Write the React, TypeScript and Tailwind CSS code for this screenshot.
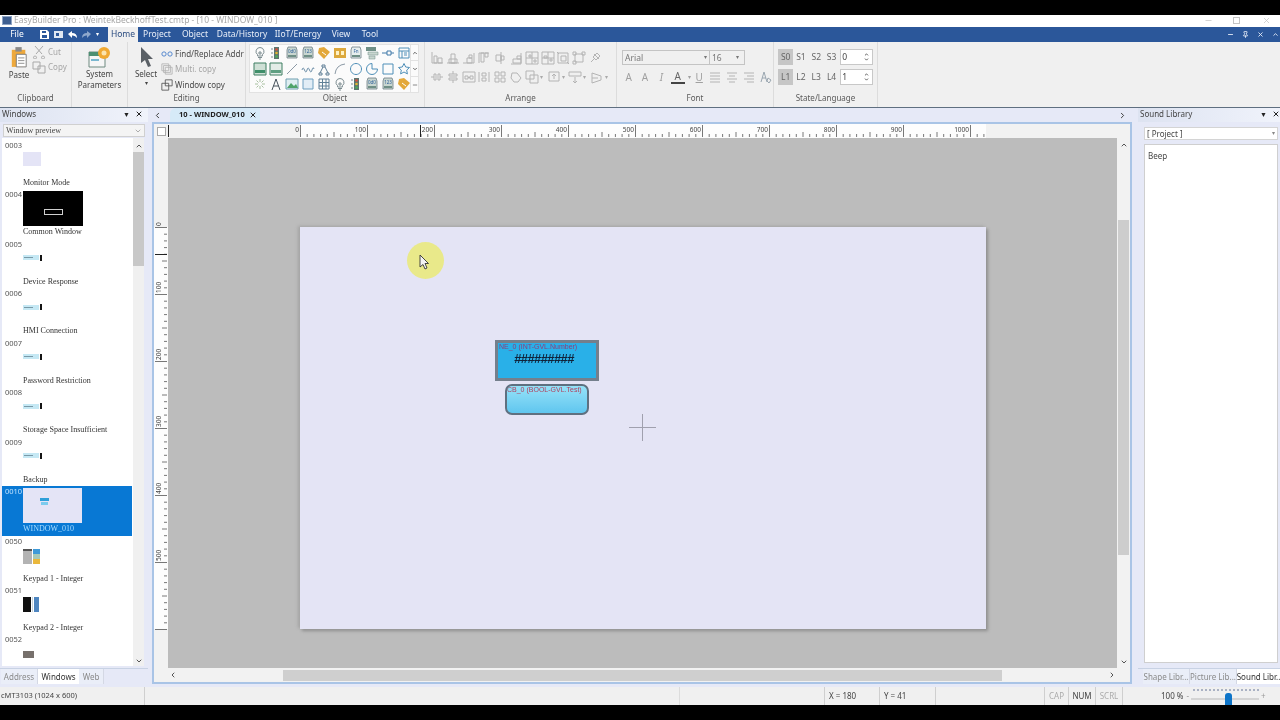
import type { ReactNode } from "react";
import { ChevronDown, ChevronLeft, ChevronRight, ChevronUp, Minus, Pin, X } from "lucide-react";

const ui = { fontFamily: '"Noto Sans", "Liberation Sans", sans-serif' };

// single-path toolbar glyph, 14 box
function Ico({ d, c = "#b4b4b4", w = 14 }: { d: string; c?: string; w?: number }) {
  return (
    <svg width={w} height={w} viewBox="0 0 14 14" fill="none" stroke={c} strokeWidth="1" className="shrink-0">
      <path d={d} />
    </svg>
  );
}

function Meter({ label = "0.0", fill = "#c9d6d0" }: { label?: string; fill?: string }) {
  return (
    <svg width="14" height="14" viewBox="0 0 14 14" className="shrink-0">
      <path d="M2 4l1-3h8l1 3v8H2z" fill={fill} stroke="#6e7f86" strokeWidth="0.8" />
      <path d="M3 9h8v2H3z" fill="#6f8f86" />
      <text x="7" y="6.5" fontSize="4.5" textAnchor="middle" fill="#2f5f9a">{label}</text>
    </svg>
  );
}

function Bulb() {
  return <Ico c="#7d8d91" d="M7 1.5a4 4 0 0 1 2.4 7.2V10H4.6V8.7A4 4 0 0 1 7 1.5zM5 11.5h4M6 13h2M6 6h2v2H6z" />;
}
function Light() {
  return (
    <svg width="14" height="14" viewBox="0 0 14 14" className="shrink-0">
      <path d="M5 1h5v12H5z" fill="#5d7570" />
      <circle cx="7.5" cy="3.5" r="1.3" fill="#d8503c" />
      <circle cx="7.5" cy="7" r="1.3" fill="#e5b52f" />
      <circle cx="7.5" cy="10.5" r="1.3" fill="#4fae58" />
      <path d="M2 3h2M2 7h2M2 11h2" stroke="#7d8d91" />
    </svg>
  );
}
function Tag() {
  return (
    <svg width="14" height="14" viewBox="0 0 14 14" className="shrink-0">
      <path d="M7 1l6 5-6 7-6-6 1-5z" fill="#e3a83a" />
      <path d="M5 6l4 3" stroke="#fff" />
    </svg>
  );
}

const galleryRows: ReactNode[][] = [
  [
    <Bulb />,
    <Light />,
    <Meter label="0d0" />,
    <Meter label="123" />,
    <Tag />,
    <svg width="14" height="14" viewBox="0 0 14 14" className="shrink-0">
      <path d="M1 2h12v10H1z" fill="#dca83c" />
      <path d="M3 5h3v4H3zM8 5h3v4H8z" fill="#fff2c4" />
    </svg>,
    <Meter label="Fn" fill="#e7eeee" />,
    <svg width="14" height="14" viewBox="0 0 14 14" className="shrink-0">
      <path d="M1 1h10v4H1z" fill="#6f8f86" />
      <path d="M3 6h10v3H3zM4 10h6v3H4z" fill="#c9d6d0" stroke="#6f8f86" strokeWidth="0.5" />
    </svg>,
    <Ico c="#3f78a8" d="M1 7h5M6 5h4v4H6zM10 7h3" />,
    <Ico c="#4f8fb8" d="M2 2h10v10H2zM2 5h10M5 5v7M7 7h3M7 9h3" />,
  ],
  [
    <svg width="14" height="14" viewBox="0 0 14 14" className="shrink-0">
      <path d="M1 1h12v12H1z" fill="#cfe0d6" stroke="#3f7f62" />
      <path d="M2 8h10v3H2z" fill="#3f8f6a" />
    </svg>,
    <svg width="14" height="14" viewBox="0 0 14 14" className="shrink-0">
      <path d="M1 1h12v12H1z" fill="#e3ece7" stroke="#3f7f62" />
      <path d="M2 8h10v3H2z" fill="#5f9f82" />
    </svg>,
    <Ico c="#8c9aa6" d="M2 12L12 2" />,
    <Ico c="#6c8ea8" d="M1 8q1-4 2.5 0t2.5 0 2.5 0 2.5 0 2-1" />,
    <Ico c="#5f7f96" d="M2 11h3v2H2zM9 11h3v2H9zM5 3h3v2H5zM6 5l-3 6M8 5l3 6" />,
    <Ico c="#8c9aa6" d="M2 12Q3 3 12 2" />,
    <Ico c="#4f8fb8" d="M7 1.5a5.5 5.5 0 1 0 .01 0z" />,
    <Ico c="#4f8fb8" d="M7 1.5a5.5 5.5 0 1 0 5.5 5.5H7z" />,
    <Ico c="#4f8fb8" d="M2 2h10v10H2z" />,
    <Ico c="#4f8fb8" d="M7 1.5l1.7 3.5 3.8.5-2.8 2.6.7 3.8L7 10l-3.4 1.9.7-3.8-2.8-2.6 3.8-.5z" />,
  ],
  [
    <Ico c="#a8c0a0" d="M7 2v3M7 9v3M2 7h3M9 7h3M3.5 3.5l2 2M10.5 3.5l-2 2M3.5 10.5l2-2M10.5 10.5l-2-2" />,
    <Ico c="#44505a" d="M3 13L7 2l4 11M4.5 9h5" />,
    <svg width="14" height="14" viewBox="0 0 14 14" className="shrink-0">
      <path d="M1 2h12v10H1z" fill="#dfeef2" stroke="#6f9fb0" />
      <path d="M2 11l4-5 3 3 2-2 2 4z" fill="#4fa36a" />
    </svg>,
    <svg width="14" height="14" viewBox="0 0 14 14" className="shrink-0">
      <path d="M2 2h10v10H2z" fill="#e2edf6" stroke="#6f9fc0" />
    </svg>,
    <Ico c="#5f7f96" d="M2 2h10v10H2zM2 5.5h10M2 9h10M5.5 2v10M9 2v10" />,
    <Bulb />,
    <Light />,
    <Meter label="0d0" />,
    <Meter label="123" />,
    <Tag />,
  ],
];

const arrangeTop = [
  "M2 1v11h11M4 5h3v7H4zM8 7h4v5H8z",
  "M1 12h12M5 3h4v9H5zM3 8h8v4H3z",
  "M1 12h11V2M5 7h5v5H5zM7 4h3v3H7z",
  "M2 2h10M2 2v10M4 2h3v9H4zM8 2h3v4H8z",
  "M8 1v12M3 4h5v6H3zM8 5h3v4H8z",
  "M12 2v11H2M4 8h8v4H4zM8 5h4v3H8z",
  "M1 1h12v12H1zM7 1v12M1 7h12M4 4h2v2H4zM9 9h2v2H9z",
  "M1 1h12v12H1zM1 7h12M7 1v12M3 5h3v2H3zM9 8h2v2H9z",
  "M2 2h10v10H2zM5 5h5v5H5zM1 1l2 2M13 13l-2-2",
  "M3 3h8v8H3zM1 1h3v3H1zM10 1h3v3h-3zM1 10h3v3H1z",
  "M3 11l4-4M6 3l5 5M9 2l3 3-4 4-3-3z",
];
const arrangeBottom: [string, boolean][] = [
  ["M1 7h3M10 7h3M4 4h2v6H4zM8 4h2v6H8z", false],
  ["M7 1v3M7 10v3M3 4h8v2H3zM3 8h8v2H3z", false],
  ["M1 2h12v10H1zM3 6h3v3H3zM8 6h3v3H8zM6 7.5h2", false],
  ["M2 2v10M12 2v10M5 3h4v3H5zM5 8h4v3H5z", false],
  ["M2 2h4v4H2zM8 2h4v4H8zM2 8h4v4H2zM8 8h4v4H8z", false],
  ["M3 3h5l4 5-3 4H5L2 8z", false],
  ["M1 1h8v8H1zM5 5h8v8H5z", true],
  ["M2 2h10v9H2zM7 9V4M5 6l2-2 2 2", true],
  ["M1 2h12v4H1zM7 7v6M5 11l2 2 2-2", true],
  ["M2 3l9 3v4l-9 3zM2 8h6", true],
];

function Group({ w, label, children }: { w: string; label: string; children: ReactNode }) {
  return (
    <div className={`${w} h-full shrink-0 flex flex-col border-r border-[#dcdcdc]`}>
      <div className="h-[50px] relative">{children}</div>
      <div className="text-[8px] text-[#5a5a5a] text-center leading-[12px]">{label}</div>
    </div>
  );
}

function SmallAction({ icon, label, dim }: { icon: ReactNode; label: string; dim?: boolean }) {
  return (
    <div className={`flex items-center gap-[2px] h-[15.5px] text-[8px] whitespace-nowrap ${dim ? "text-[#a6a6a6]" : "text-[#4a4a4a]"}`}>
      {icon}
      <span>{label}</span>
    </div>
  );
}

function Ribbon() {
  return (
    <div className="h-[66px] shrink-0 bg-[#f0f0f0] flex border-b border-[#5f6f80]" style={ui}>
      <Group w="w-[72px]" label="Clipboard">
        <div className="flex pl-[8px] pt-[4px]">
          <div className="w-[22px] flex flex-col items-center">
            <svg width="18" height="22" viewBox="0 0 20 24">
              <path d="M2 4h15v19H2z" fill="#eea93c" />
              <path d="M6 1h7v5H6z" fill="#8a8a8a" />
              <path d="M7 9h11v14H7z" fill="#fff" stroke="#777" />
              <path d="M9 13h7M9 16h7M9 19h7" stroke="#888" />
            </svg>
            <span className="text-[8px] text-[#444] leading-[11px] mt-[1px]">Paste</span>
          </div>
          <div className="ml-[2px] -mt-[2px]">
            <SmallAction dim label="Cut" icon={<Ico c="#a8a8a8" d="M3 1l7 8M11 1L4 9M3 11a1.5 1.5 0 1 0 .01 0zM11 11a1.5 1.5 0 1 0 .01 0z" />} />
            <SmallAction dim label="Copy" icon={<Ico c="#a8a8a8" d="M1 2h7v7H1zM6 6h7v7H6z" />} />
          </div>
        </div>
      </Group>
      <Group w="w-[56px]" label="">
        <div className="flex flex-col items-center pt-[4px]">
          <svg width="24" height="22" viewBox="0 0 24 22">
            <path d="M1 6h16v15H1z" fill="#f6f6f6" stroke="#6e8a80" />
            <path d="M1 6h16v4H1z" fill="#4c8f72" />
            <path d="M3 13h8v2H3z" fill="#7ab7d0" />
            <circle cx="16" cy="7" r="6" fill="#f0a932" />
            <circle cx="16" cy="7" r="2.5" fill="#fbe4ad" />
          </svg>
          <span className="text-[8px] text-[#444] leading-[11px] text-center">System Parameters</span>
        </div>
      </Group>
      <Group w="w-[118px]" label="Editing">
        <div className="flex pt-[4px] pl-[8px]">
          <div className="w-[20px] flex flex-col items-center">
            <svg width="14" height="21" viewBox="0 0 14 21" className="ml-[2px]">
              <path d="M1 1l12 12H8l3 7-3 1-3-7-4 3z" fill="#5a6066" />
            </svg>
            <span className="text-[8px] text-[#444] leading-[11px] mt-[1px]">Select</span>
            <span className="text-[6px] text-[#444] leading-[8px]">▾</span>
          </div>
          <div className="ml-[5px]">
            <SmallAction label="Find/Replace Addr" icon={<Ico w={12} c="#3f78c8" d="M1 7a2.5 2.5 0 1 0 5 0 2.5 2.5 0 1 0-5 0M8 7a2.5 2.5 0 1 0 5 0 2.5 2.5 0 1 0-5 0" />} />
            <SmallAction dim label="Multi. copy" icon={<Ico w={12} d="M1 1h8v8H1zM3 3h8v8H3zM5 5h8v8H5z" />} />
            <SmallAction label="Window copy" icon={<Ico w={12} c="#555" d="M5 1h8v7H5zM1 5h8v8H1z" />} />
          </div>
        </div>
      </Group>
      <Group w="w-[179px]" label="Object">
        <div className="flex ml-[3px] mt-[2px] w-[170px] h-[49px] bg-[#fbfbfb] border border-[#e2e2e2]">
          <div className="w-[160px] flex flex-col justify-between py-[1px] pl-[3px] overflow-hidden">
            {galleryRows.map((row, i) => (
              <div key={i} className="flex gap-[2px]">
                {row.map((icon, j) => <span key={j} className="w-[14px] h-[14px] flex">{icon}</span>)}
              </div>
            ))}
          </div>
          <div className="flex-1 flex flex-col border-l border-[#e2e2e2] text-[#666]">
            <div className="flex-1 flex items-center justify-center border-b border-[#e2e2e2]"><ChevronUp size={6} strokeWidth={4} /></div>
            <div className="flex-1 flex items-center justify-center border-b border-[#e2e2e2]"><ChevronDown size={6} strokeWidth={4} /></div>
            <div className="flex-1 flex items-center justify-center"><Minus size={6} strokeWidth={3} /></div>
          </div>
        </div>
      </Group>
      <Group w="w-[192px]" label="Arrange">
        <div className="pl-[5px] pt-[9px]">
          <div className="flex gap-[1.8px]">
            {arrangeTop.map((d, i) => <Ico key={i} d={d} />)}
          </div>
          <div className="flex gap-[1.8px] mt-[5px]">
            {arrangeBottom.map(([d, caret], i) => (
              <span key={i} className={`flex items-center ${caret ? "mr-[2px]" : ""}`}>
                <Ico d={d} />
                {caret && <span className="text-[6px] text-[#aaa] ml-[1px]">▾</span>}
              </span>
            ))}
          </div>
        </div>
      </Group>
      <Group w="w-[157px]" label="Font">
        <div className="pl-[5px] pt-[8px]">
          <div className="flex w-[123px] h-[15px] bg-[#f0f0f0] border border-[#c4c4c4] text-[8.5px] text-[#777] leading-[13px]">
            <div className="w-[87px] px-[2px] flex justify-between border-r border-[#c4c4c4]"><span>Arial</span><span className="text-[6px]">▾</span></div>
            <div className="flex-1 px-[2px] flex justify-between pr-[5px]"><span>16</span><span className="text-[6px]">▾</span></div>
          </div>
          <div className="flex items-center gap-[3px] mt-[5px] text-[#a0a0a0] text-[10px] leading-[14px]">
            <span className="w-[14px] text-center">A</span>
            <span className="w-[14px] text-center">A</span>
            <span className="w-[14px] text-center italic">I</span>
            <span className="w-[14px] text-center text-[#666] border-b-2 border-[#444] leading-[11px]">A</span>
            <span className="text-[6px]">▾</span>
            <span className="w-[12px] text-center underline">U</span>
            <Ico d="M2 3h10M2 6h10M2 9h10M2 12h10" />
            <Ico d="M2 3h10M4 6h6M2 9h10M4 12h6" />
            <Ico d="M2 3h10M5 6h7M2 9h10M5 12h7" />
            <Ico c="#9aa6b0" d="M2 12L5 2l3 10M3 8h4M9 8l3 2-2 3-2-2z" />
          </div>
        </div>
      </Group>
      <Group w="w-[104px]" label="State/Language">
        <div className="pl-[4px] pt-[7px] text-[8.5px] text-[#666]">
          {[
            { keys: ["S0", "S1", "S2", "S3"], value: "0" },
            { keys: ["L1", "L2", "L3", "L4"], value: "1" },
          ].map((row, i) => (
            <div key={i} className={`flex items-center h-[16px] ${i ? "mt-[4px]" : ""}`}>
              {row.keys.map((k, j) => (
                <span key={k} className={`w-[15.3px] h-[16px] leading-[16px] text-center ${j === 0 ? "bg-[#c6c6c6]" : ""}`}>{k}</span>
              ))}
              <div className="w-[33px] h-[16px] ml-[1px] bg-white border border-[#c8c8c8] flex justify-between items-center pl-[1px] pr-[3px] text-[#444]">
                <span>{row.value}</span>
                <span className="flex flex-col">
                  <ChevronUp size={5} strokeWidth={4} />
                  <ChevronDown size={5} strokeWidth={4} />
                </span>
              </div>
            </div>
          ))}
        </div>
      </Group>
      <div className="flex-1" />
    </div>
  );
}

// small window thumbnails for the preview list
function DialogThumb() {
  return (
    <div className="flex items-center w-[20px] h-[6px]">
      <div className="w-[16px] h-[5px] bg-[#c5e8f4] flex items-center pl-[1px]">
        <div className="w-[9px] h-[1px] bg-[#7a9aa8]" />
      </div>
      <div className="w-[2px] h-[6px] ml-[1px] bg-[#141414]" />
    </div>
  );
}

function Keypad1() {
  return (
    <div className="grid grid-cols-[9px_7px] gap-x-[1px] w-[17px] h-[15px] mt-[3px]">
      <div className="bg-[#b3b3b3] border-t-2 border-[#555]" />
      <div className="flex flex-col">
        <div className="h-[5px] bg-[#3f9ad8]" />
        <div className="h-[5px] bg-[#a7c9b8]" />
        <div className="h-[5px] bg-[#eab83c]" />
      </div>
    </div>
  );
}
function Keypad2() {
  return (
    <div className="flex gap-[1px] w-[16px] h-[15px] mt-[2px]">
      <div className="w-[9px] bg-[#101010]" />
      <div className="w-[1px] bg-[#c8d4dc]" />
      <div className="w-[5px] bg-[#4f86c0]" />
    </div>
  );
}

const windows: { id: string; name: string; thumb: ReactNode }[] = [
  { id: "0003", name: "Monitor Mode", thumb: <div className="w-[18px] h-[14px] bg-[#e4e4f6]" /> },
  {
    id: "0004",
    name: "Common Window",
    thumb: (
      <div className="w-[60px] h-[35px] bg-black flex items-center justify-center pt-[7px]">
        <div className="w-[19px] h-[6px] border border-[#d0d0d0]" />
      </div>
    ),
  },
  { id: "0005", name: "Device Response", thumb: <DialogThumb /> },
  { id: "0006", name: "HMI Connection", thumb: <DialogThumb /> },
  { id: "0007", name: "Password Restriction", thumb: <DialogThumb /> },
  { id: "0008", name: "Storage Space Insufficient", thumb: <DialogThumb /> },
  { id: "0009", name: "Backup", thumb: <DialogThumb /> },
  {
    id: "0010",
    name: "WINDOW_010",
    thumb: (
      <div className="w-[59px] h-[35px] bg-[#e4e4f6] pt-[10px] pl-[17px]">
        <div className="w-[9px] h-[3px] bg-[#2f9fd8]" />
        <div className="w-[7px] h-[3px] ml-[1px] mt-[1px] bg-[#7ccbee]" />
      </div>
    ),
  },
  { id: "0050", name: "Keypad 1 - Integer", thumb: <Keypad1 /> },
  { id: "0051", name: "Keypad 2 - Integer", thumb: <Keypad2 /> },
  { id: "0052", name: "", thumb: <div className="w-[11px] h-[7px] mt-[3px] bg-[#77706c]" /> },
];

function WindowItem({ id, name, thumb }: { id: string; name: string; thumb: ReactNode }) {
  const selected = id === "0010";
  return (
    <div className={`flex h-[49.45px] w-[130px] shrink-0 ${selected ? "bg-[#0878d4]" : ""}`}>
      <div className={`w-[21px] pl-[3px] text-[7.5px] leading-[10px] ${selected ? "text-[#bfe2ff]" : "text-[#555]"}`} style={ui}>
        {id}
      </div>
      <div className="flex-1 pt-[1.5px]">
        <div className="h-[35px] flex items-center">{thumb}</div>
        <div
          className={`text-[8px] leading-[10px] mt-[1.5px] whitespace-nowrap ${selected ? "text-[#a8dcff]" : "text-[#333]"}`}
          style={{ fontFamily: '"Liberation Serif", serif' }}
        >
          {name}
        </div>
      </div>
    </div>
  );
}

function PanelHeader({ title, pr }: { title: string; pr: string }) {
  return (
    <div className={`w-full h-[14px] flex items-center justify-between pl-[2px] ${pr} pb-[2px] bg-gradient-to-r from-[#dde3f1] to-[#f0f3fb] text-[8px] text-[#444]`}>
      <span>{title}</span>
      <span className="flex items-center gap-[5px] text-[#222]">
        <span className="text-[7px] leading-none">▼</span>
        <X size={8} strokeWidth={3} />
      </span>
    </div>
  );
}

function BottomTabs({ tabs, active, widths }: { tabs: string[]; active: string; widths: string[] }) {
  return (
    <div className="flex h-[16px] mt-[2px] border-t border-[#c8d2e4] text-[8px]">
      {tabs.map((t, i) => (
        <div
          key={t}
          className={`${widths[i]} h-full flex items-center justify-center whitespace-nowrap overflow-hidden ${
            t === active ? "bg-white text-[#333]" : "bg-[#eaeef8] text-[#8a8a8a] border-r border-[#d4d8e4]"
          }`}
        >
          {t}
        </div>
      ))}
    </div>
  );
}

function LeftPanel() {
  return (
    <div className="w-[148px] shrink-0 flex flex-col" style={ui}>
      <PanelHeader title="Windows" pr="pr-[5px]" />
      <div
        className="mx-[3px] mt-[2px] h-[13px] bg-[#f4f4f4] border border-[#d0d0d0] flex items-center justify-between px-[2px] text-[8px] text-[#444]"
        style={{ fontFamily: '"Liberation Serif", serif' }}
      >
        <span>Window preview</span>
        <ChevronDown size={8} className="text-[#888]" />
      </div>
      <div className="h-[528px] mt-[1px] ml-[2px] w-[142px] bg-white flex overflow-hidden">
        <div className="w-[131px] flex flex-col overflow-hidden pt-[2px]">
          {windows.map((win) => <WindowItem key={win.id} {...win} />)}
        </div>
        <div className="w-[11px] bg-[#f0f0f0] flex flex-col items-center pt-[4px] text-[#555]">
          <ChevronUp size={8} strokeWidth={3} />
          <div className="w-full h-[114px] mt-[2px] bg-[#c8c8c8]" />
          <div className="flex-1" />
          <ChevronDown size={8} strokeWidth={3} className="mb-[1px]" />
        </div>
      </div>
      <BottomTabs tabs={["Address", "Windows", "Web"]} active="Windows" widths={["w-[37px] ml-[1px]", "w-[41px]", "w-[25px]"]} />
    </div>
  );
}

const majors = [0, 100, 200, 300, 400, 500, 600, 700, 800, 900, 1000];
const minors = Array.from({ length: 103 }, (_, i) => i * 10);

function HRuler() {
  return (
    <svg width="949" height="14" className="block bg-[#f2f2f2]">
      <rect x="132" y="0" width="686" height="14" fill="#fdfdfd" />
      {minors.map((v) => (
        <path key={v} d={`M${132.5 + v * 0.67} ${v % 100 === 0 ? 1 : v % 50 === 0 ? 8 : 10}V13`} stroke="#555" strokeWidth="0.8" />
      ))}
      <path d="M0.5 1V13M252.5 1V13" stroke="#222" />
      {majors.map((v) => (
        <text key={v} x={131 + v * 0.67} y="8" fontSize="6.5" textAnchor="end" fill="#444">{v}</text>
      ))}
    </svg>
  );
}

function VRuler() {
  const rows = [0, 100, 200, 300, 400, 500];
  const ticks = Array.from({ length: 61 }, (_, i) => i * 10);
  return (
    <svg width="14" height="530" className="block bg-[#f2f2f2]">
      <rect x="0" y="89" width="14" height="402" fill="#fdfdfd" />
      {ticks.map((v) => (
        <path key={v} d={`M${v % 100 === 0 ? 1 : v % 50 === 0 ? 8 : 10} ${89.5 + v * 0.67}H13`} stroke="#555" strokeWidth="0.8" />
      ))}
      <path d="M1 116.5H13" stroke="#222" />
      {rows.map((v) => (
        <text key={v} fontSize="6.5" fill="#444" textAnchor="start" transform={`translate(7 ${88 + v * 0.67}) rotate(-90)`}>{v}</text>
      ))}
    </svg>
  );
}

function Page() {
  return (
    <div className="relative w-[686px] h-[402px] bg-[#e4e4f5] shadow-[-2px_-1px_3px_#a4a4a4,2px_2px_3px_#8f8f8f]" style={{ fontFamily: '"Liberation Sans", sans-serif' }}>
      {/* numeric object */}
      <div className="absolute left-[195px] top-[113px] w-[104px] h-[41px] border-[3px] border-[#747f8c] bg-[#29b0e8]">
        <div className="text-[7px] leading-[8px] text-[#8e3f78] whitespace-nowrap pl-[1px]">NE_0 (INT-GVL.Number)</div>
        <div className="text-[13px] leading-[14px] mt-[1px] text-center text-[#10243c] font-bold pr-[6px] tracking-[-0.6px]">#########</div>
      </div>
      {/* bit button */}
      <div className="absolute left-[205px] top-[157px] w-[84px] h-[31px] rounded-[7px] border-2 border-[#5f7080] bg-gradient-to-b from-[#95e2f8] to-[#5fc6ef] overflow-hidden">
        <div className="text-[7px] leading-[8px] text-[#b0405e] whitespace-nowrap text-center pr-[8px]">CB_0 (BOOL-GVL.Test)</div>
      </div>
      {/* crosshair */}
      <svg className="absolute left-[329px] top-[187px]" width="27" height="27">
        <path d="M13.5 0V27M0 13.5H27" stroke="#a0a0ae" />
      </svg>
      {/* mouse pointer with highlight */}
      <div className="absolute left-[107px] top-[15px] w-[37px] h-[37px] rounded-full bg-[#e9e98a]" />
      <svg className="absolute left-[119px] top-[27px]" width="10" height="16" viewBox="0 0 10 16">
        <path d="M1 1v12l3-2.5 2 4.5 2-1-2-4.5h3.5z" fill="#f4f4f4" stroke="#333" strokeWidth="0.9" />
      </svg>
    </div>
  );
}

function CenterPanel() {
  return (
    <div className="w-[980px] ml-[4px] shrink-0 flex flex-col" style={ui}>
      <div className="h-[14px] flex text-[7.5px]">
        <ChevronLeft size={9} strokeWidth={2.5} className="ml-[1px] mt-[3px] text-[#333]" />
        <div className="ml-[8px] w-[90px] h-[14px] bg-[#d6eaf8] flex items-center justify-between pl-[9px] pr-[3px] font-bold text-[#222] rounded-tl-[6px] whitespace-nowrap">
          <span>10 - WINDOW_010</span>
          <X size={8} strokeWidth={3} />
        </div>
        <div className="flex-1" />
        <ChevronRight size={9} strokeWidth={2.5} className="mt-[3px] mr-[5px] text-[#333]" />
      </div>
      <div className="w-[980px] h-[562px] border-2 border-[#a9c4e6] bg-[#f2f2f2] grid grid-cols-[14px_949px_13px] grid-rows-[14px_530px_14px]">
        <div className="flex items-center justify-center">
          <div className="w-[9px] h-[9px] bg-white border border-[#aaa]" />
        </div>
        <HRuler />
        <div />
        <VRuler />
        <div className="bg-[#bcbcbc] pl-[132px] pt-[89px] overflow-hidden">
          <Page />
        </div>
        <div className="flex flex-col items-center pt-[3px] text-[#555]">
          <ChevronUp size={8} strokeWidth={3} />
          <div className="w-[11px] h-[335px] mt-[71px] bg-[#cdcdcd]" />
          <div className="flex-1" />
          <ChevronDown size={8} strokeWidth={3} className="mb-[2px]" />
        </div>
        <div className="col-span-3 flex items-center text-[#555]">
          <ChevronLeft size={8} strokeWidth={3} className="ml-[15px]" />
          <div className="w-[719px] h-[11px] ml-[106px] bg-[#cfcfcf]" />
          <div className="flex-1" />
          <ChevronRight size={8} strokeWidth={3} className="mr-[14px]" />
        </div>
      </div>
    </div>
  );
}

function RightPanel() {
  return (
    <div className="flex-1 ml-[6px] flex flex-col min-w-0" style={ui}>
      <PanelHeader title="Sound Library" pr="pr-0" />
      <div className="ml-[6px] mr-[2px] mt-[5px] h-[13px] bg-white border border-[#d4d4d4] flex items-center justify-between px-[2px] text-[8px] text-[#444]">
        <span>[ Project ]</span>
        <span className="text-[6px] text-[#888]">▾</span>
      </div>
      <div className="ml-[6px] mr-[2px] mt-[4px] mb-[3px] h-[519px] bg-white border border-[#cfcfcf] pl-[3px] pt-[5px] text-[8px] text-[#444]">Beep</div>
      <BottomTabs tabs={["Shape Libr...", "Picture Lib...", "Sound Libr.."]} active="Sound Libr.." widths={["w-[47px] ml-[5px]", "w-[47px]", "w-[43px]"]} />
    </div>
  );
}

function StatusCell({ w, children, dim, left }: { w: string; children?: ReactNode; dim?: boolean; left?: boolean }) {
  return (
    <div className={`${w} h-full shrink-0 flex items-center ${left ? "pl-[4px]" : "justify-center"} border-r border-[#cfcfcf] ${dim ? "text-[#ababab]" : "text-[#444]"}`}>
      {children}
    </div>
  );
}

function StatusBar() {
  return (
    <div className="h-[18px] shrink-0 bg-[#f0f0f0] flex items-center text-[8px] text-[#444]" style={ui}>
      <div className="w-[145px] h-full flex items-center pl-[1px] border-r border-[#cfcfcf] text-[7.5px] whitespace-nowrap">cMT3103 (1024 x 600)</div>
      <div className="w-[535px] h-full border-r border-[#dcdcdc]" />
      <div className="w-[145px] h-full border-r border-[#cfcfcf]" />
      <StatusCell w="w-[55px]" left>X = 180</StatusCell>
      <StatusCell w="w-[56px]" left>Y = 41</StatusCell>
      <StatusCell w="w-[109px]" />
      <StatusCell w="w-[24px]" dim>CAP</StatusCell>
      <StatusCell w="w-[27px]">NUM</StatusCell>
      <StatusCell w="w-[27px]" dim>SCRL</StatusCell>
      <div className="flex-1 h-full flex items-center pl-[38px] relative">
        <span className="whitespace-nowrap">100 %</span>
        <span className="ml-[3px] text-[#999]">-</span>
        <div className="relative w-[68px] h-full ml-[2px]">
          <div className="absolute left-0 right-0 top-[11px] h-[2px] bg-[#d4d4d4]" />
          <div className="absolute left-[2px] right-0 top-[2px] h-[2px] border-t-2 border-dotted border-[#aab2c4]" />
          <div className="absolute left-[34px] top-[6px] w-[7px] h-[12px] rounded-t-[3px] bg-[#0d74c8]" />
        </div>
        <span className="ml-[2px] text-[#999]">+</span>
      </div>
    </div>
  );
}

export default function App() {
  return (
    <div className="w-[1280px] h-[720px] bg-black flex flex-col overflow-hidden blur-[0.3px]">
      <div className="h-[15px] shrink-0" />
      <div className="h-[12px] shrink-0 bg-white flex items-center pb-[2px] text-[8.5px] text-[#a8a8a8]" style={ui}>
        <div className="w-[10px] h-[9px] ml-[2px] mr-[2px] bg-[#3f5f90] border border-[#8fa4c4]" />
        <span>EasyBuilder Pro : WeintekBeckhoffTest.cmtp - [10 - WINDOW_010 ]</span>
        <div className="flex-1" />
        <Minus size={9} className="mr-[20px] text-[#c4c4c4]" />
        <div className="w-[7px] h-[7px] mr-[22px] border border-[#c4c4c4]" />
        <X size={9} className="mr-[9px] text-[#c4c4c4]" />
      </div>
      <div className="h-[15px] shrink-0 bg-[#2b579a] flex items-center text-[8.5px] text-[#e8eef8]" style={ui}>
        <span className="w-[34px] text-center text-white">File</span>
        <span className="flex items-center gap-[5px] w-[74px] pl-[6px] text-white">
          <svg width="9" height="9" viewBox="0 0 9 9"><path d="M0 0h7l2 2v7H0z" fill="#fff" /><path d="M2 1h4v2H2zM2 5h5v3H2z" fill="#2b579a" /></svg>
          <svg width="9" height="9" viewBox="0 0 9 9"><path d="M0 1h9v7H0z" fill="#dfe7f2" /><path d="M2 3h3v3H2z" fill="#2b579a" /></svg>
          <svg width="9" height="9" viewBox="0 0 9 9"><path d="M0 4l4-3v2q5 0 5 5-2-3-5-2.5V8z" fill="#fff" /></svg>
          <svg width="9" height="9" viewBox="0 0 9 9"><path d="M9 4L5 1v2Q0 3 0 8q2-3 5-2.5V8z" fill="#8fa8cc" /></svg>
          <span className="text-[6px]">▾</span>
        </span>
        <span className="w-[30px] h-full bg-[#f0f0f0] text-[#2b4c80] flex items-center justify-center">Home</span>
        <span className="w-[38px] text-center">Project</span>
        <span className="w-[38px] text-center">Object</span>
        <span className="w-[56px] text-center">Data/History</span>
        <span className="w-[56px] text-center">IIoT/Energy</span>
        <span className="w-[30px] text-center">View</span>
        <span className="w-[28px] text-center">Tool</span>
        <div className="flex-1" />
        <Minus size={7} strokeWidth={3} className="mr-[8px]" />
        <Pin size={7} strokeWidth={3} className="mr-[8px]" />
        <X size={7} strokeWidth={3} className="mr-[8px]" />
        <ChevronUp size={7} strokeWidth={3} className="mr-[1px]" />
      </div>
      <Ribbon />
      <div className="h-[579px] shrink-0 bg-[#e6e9f7] flex">
        <LeftPanel />
        <CenterPanel />
        <RightPanel />
      </div>
      <StatusBar />
    </div>
  );
}
